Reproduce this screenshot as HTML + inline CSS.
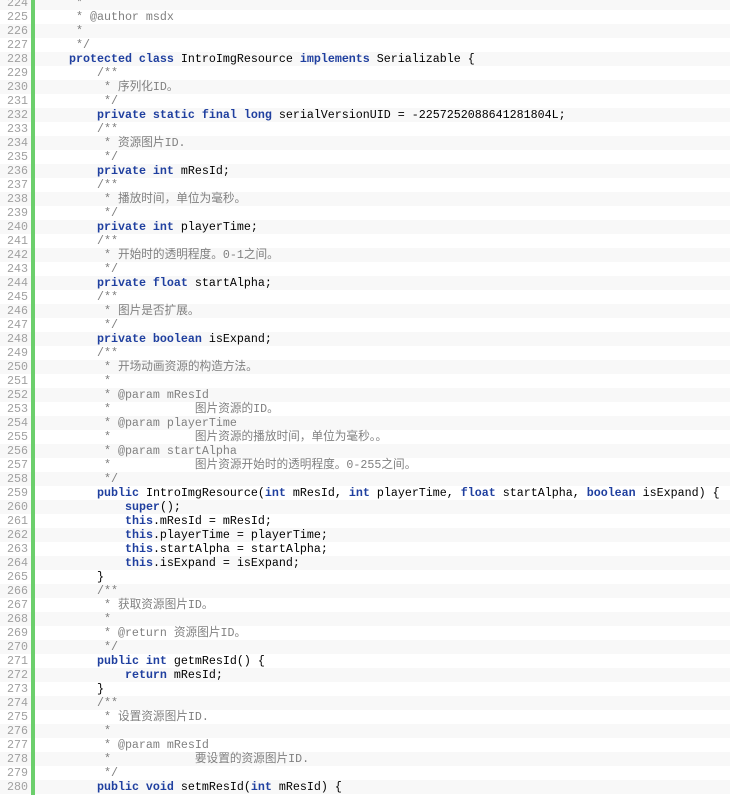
<!DOCTYPE html>
<html><head><meta charset="utf-8"><style>
body{margin:0;width:730px;height:795px;overflow:hidden;background:#fff;font-family:"Liberation Mono","Noto Sans CJK SC",monospace;font-size:11.67px;}
#w{position:absolute;top:-4px;left:0;width:730px}
.r{height:14px;line-height:14px;white-space:pre;position:relative}
.r:nth-child(odd){background:#f8f8f8}
.n{position:absolute;left:0;width:28px;text-align:right;color:#a0a0a0}
.c{position:absolute;left:41px;color:#000}
.bar{position:absolute;left:31px;top:0;width:4px;height:795px;background:#6ccf6c}
.k{color:#1f3f9f;font-weight:bold}
.m{color:#808080}
</style></head><body>
<div id="w">
<div class="r"><span class="n">224</span><span class="c m">     *</span></div>
<div class="r"><span class="n">225</span><span class="c m">     * @author msdx</span></div>
<div class="r"><span class="n">226</span><span class="c m">     *</span></div>
<div class="r"><span class="n">227</span><span class="c m">     */</span></div>
<div class="r"><span class="n">228</span><span class="c">    <span class="k">protected class</span> IntroImgResource <span class="k">implements</span> Serializable {</span></div>
<div class="r"><span class="n">229</span><span class="c m">        /**</span></div>
<div class="r"><span class="n">230</span><span class="c m">         * 序列化ID。</span></div>
<div class="r"><span class="n">231</span><span class="c m">         */</span></div>
<div class="r"><span class="n">232</span><span class="c">        <span class="k">private static final long</span> serialVersionUID = -2257252088641281804L;</span></div>
<div class="r"><span class="n">233</span><span class="c m">        /**</span></div>
<div class="r"><span class="n">234</span><span class="c m">         * 资源图片ID.</span></div>
<div class="r"><span class="n">235</span><span class="c m">         */</span></div>
<div class="r"><span class="n">236</span><span class="c">        <span class="k">private int</span> mResId;</span></div>
<div class="r"><span class="n">237</span><span class="c m">        /**</span></div>
<div class="r"><span class="n">238</span><span class="c m">         * 播放时间，单位为毫秒。</span></div>
<div class="r"><span class="n">239</span><span class="c m">         */</span></div>
<div class="r"><span class="n">240</span><span class="c">        <span class="k">private int</span> playerTime;</span></div>
<div class="r"><span class="n">241</span><span class="c m">        /**</span></div>
<div class="r"><span class="n">242</span><span class="c m">         * 开始时的透明程度。0-1之间。</span></div>
<div class="r"><span class="n">243</span><span class="c m">         */</span></div>
<div class="r"><span class="n">244</span><span class="c">        <span class="k">private float</span> startAlpha;</span></div>
<div class="r"><span class="n">245</span><span class="c m">        /**</span></div>
<div class="r"><span class="n">246</span><span class="c m">         * 图片是否扩展。</span></div>
<div class="r"><span class="n">247</span><span class="c m">         */</span></div>
<div class="r"><span class="n">248</span><span class="c">        <span class="k">private boolean</span> isExpand;</span></div>
<div class="r"><span class="n">249</span><span class="c m">        /**</span></div>
<div class="r"><span class="n">250</span><span class="c m">         * 开场动画资源的构造方法。</span></div>
<div class="r"><span class="n">251</span><span class="c m">         *</span></div>
<div class="r"><span class="n">252</span><span class="c m">         * @param mResId</span></div>
<div class="r"><span class="n">253</span><span class="c m">         *            图片资源的ID。</span></div>
<div class="r"><span class="n">254</span><span class="c m">         * @param playerTime</span></div>
<div class="r"><span class="n">255</span><span class="c m">         *            图片资源的播放时间，单位为毫秒。。</span></div>
<div class="r"><span class="n">256</span><span class="c m">         * @param startAlpha</span></div>
<div class="r"><span class="n">257</span><span class="c m">         *            图片资源开始时的透明程度。0-255之间。</span></div>
<div class="r"><span class="n">258</span><span class="c m">         */</span></div>
<div class="r"><span class="n">259</span><span class="c">        <span class="k">public</span> IntroImgResource(<span class="k">int</span> mResId, <span class="k">int</span> playerTime, <span class="k">float</span> startAlpha, <span class="k">boolean</span> isExpand) {</span></div>
<div class="r"><span class="n">260</span><span class="c">            <span class="k">super</span>();</span></div>
<div class="r"><span class="n">261</span><span class="c">            <span class="k">this</span>.mResId = mResId;</span></div>
<div class="r"><span class="n">262</span><span class="c">            <span class="k">this</span>.playerTime = playerTime;</span></div>
<div class="r"><span class="n">263</span><span class="c">            <span class="k">this</span>.startAlpha = startAlpha;</span></div>
<div class="r"><span class="n">264</span><span class="c">            <span class="k">this</span>.isExpand = isExpand;</span></div>
<div class="r"><span class="n">265</span><span class="c">        }</span></div>
<div class="r"><span class="n">266</span><span class="c m">        /**</span></div>
<div class="r"><span class="n">267</span><span class="c m">         * 获取资源图片ID。</span></div>
<div class="r"><span class="n">268</span><span class="c m">         *</span></div>
<div class="r"><span class="n">269</span><span class="c m">         * @return 资源图片ID。</span></div>
<div class="r"><span class="n">270</span><span class="c m">         */</span></div>
<div class="r"><span class="n">271</span><span class="c">        <span class="k">public int</span> getmResId() {</span></div>
<div class="r"><span class="n">272</span><span class="c">            <span class="k">return</span> mResId;</span></div>
<div class="r"><span class="n">273</span><span class="c">        }</span></div>
<div class="r"><span class="n">274</span><span class="c m">        /**</span></div>
<div class="r"><span class="n">275</span><span class="c m">         * 设置资源图片ID.</span></div>
<div class="r"><span class="n">276</span><span class="c m">         *</span></div>
<div class="r"><span class="n">277</span><span class="c m">         * @param mResId</span></div>
<div class="r"><span class="n">278</span><span class="c m">         *            要设置的资源图片ID.</span></div>
<div class="r"><span class="n">279</span><span class="c m">         */</span></div>
<div class="r"><span class="n">280</span><span class="c">        <span class="k">public void</span> setmResId(<span class="k">int</span> mResId) {</span></div>
</div>
<div class="bar"></div>
</body></html>
